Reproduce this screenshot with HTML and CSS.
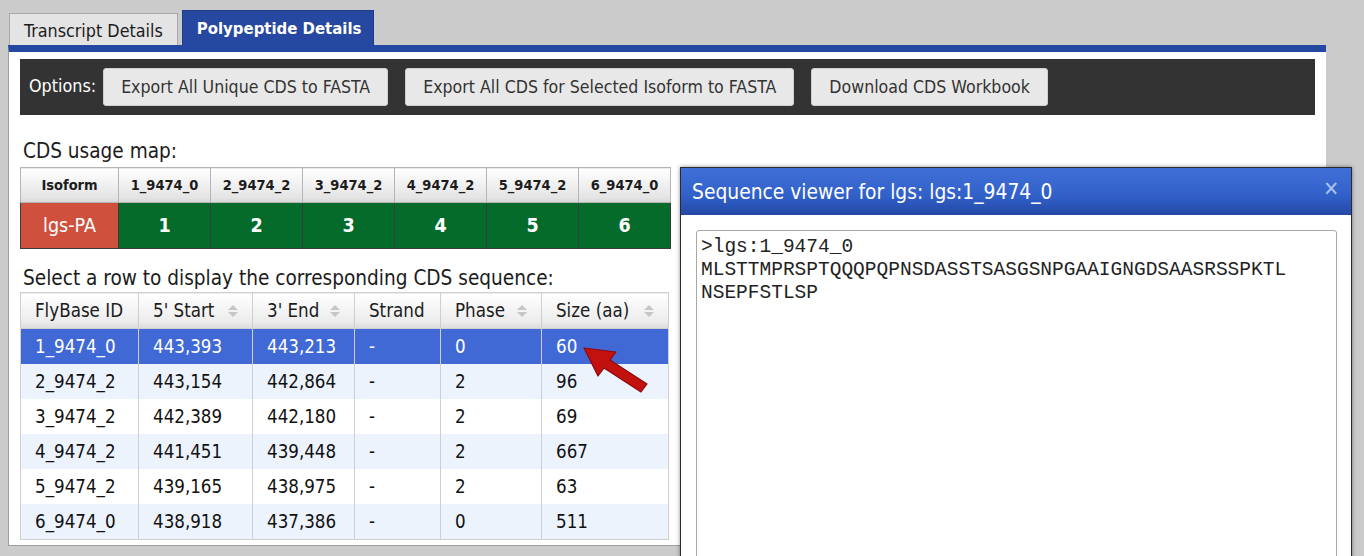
FILE: index.html
```html
<!DOCTYPE html>
<html>
<head>
<meta charset="utf-8">
<link rel="stylesheet" href="styles.css">
</head>
<body>
<div class="page">
  <div class="main">
    <div class="tabs">
      <div class="tab">Transcript Details</div>
      <div class="tab active">Polypeptide Details</div>
    </div>
    <div class="panel">
      <div class="options">
        <span class="opt-label">Options:</span>
        <button class="btn">Export All Unique CDS to FASTA</button>
        <button class="btn">Export All CDS for Selected Isoform to FASTA</button>
        <button class="btn">Download CDS Workbook</button>
      </div>
      <h2 class="heading first">CDS usage map:</h2>
      <table class="map">
        <thead>
          <tr><th class="iso">Isoform</th><th>1_9474_0</th><th>2_9474_2</th><th>3_9474_2</th><th>4_9474_2</th><th>5_9474_2</th><th>6_9474_0</th></tr>
        </thead>
        <tbody>
          <tr><td class="name">lgs-PA</td><td class="on">1</td><td class="on">2</td><td class="on">3</td><td class="on">4</td><td class="on">5</td><td class="on">6</td></tr>
        </tbody>
      </table>
      <h2 class="heading second">Select a row to display the corresponding CDS sequence:</h2>
      <table class="cds">
        <colgroup><col class="c1"><col class="c2"><col class="c3"><col class="c4"><col class="c5"><col class="c6"></colgroup>
        <thead>
          <tr>
            <th>FlyBase ID</th>
            <th class="sort">5' Start</th>
            <th class="sort">3' End</th>
            <th>Strand</th>
            <th class="sort">Phase</th>
            <th class="sort">Size (aa)</th>
          </tr>
        </thead>
        <tbody>
          <tr class="sel"><td>1_9474_0</td><td>443,393</td><td>443,213</td><td>-</td><td>0</td><td>60</td></tr>
          <tr class="odd"><td>2_9474_2</td><td>443,154</td><td>442,864</td><td>-</td><td>2</td><td>96</td></tr>
          <tr><td>3_9474_2</td><td>442,389</td><td>442,180</td><td>-</td><td>2</td><td>69</td></tr>
          <tr class="odd"><td>4_9474_2</td><td>441,451</td><td>439,448</td><td>-</td><td>2</td><td>667</td></tr>
          <tr><td>5_9474_2</td><td>439,165</td><td>438,975</td><td>-</td><td>2</td><td>63</td></tr>
          <tr class="odd"><td>6_9474_0</td><td>438,918</td><td>437,386</td><td>-</td><td>0</td><td>511</td></tr>
        </tbody>
      </table>
    </div>
  </div>
  <div class="strip"></div>
</div>

<svg class="arrow" width="70" height="50" viewBox="0 0 70 50">
  <path d="M2 2 L34 6 L28 14 L65 38 L59 46 L22 22 L16 30 Z" fill="#c3110f" stroke="#8e0a0a" stroke-width="1.2" stroke-linejoin="round"/>
</svg>

<div class="dialog">
  <div class="dlg-title">
    <span>Sequence viewer for lgs: lgs:1_9474_0</span>
    <span class="close">&#x2715;</span>
  </div>
  <div class="dlg-body">
    <div class="seq">&gt;lgs:1_9474_0
MLSTTMPRSPTQQQPQPNSDASSTSASGSNPGAAIGNGDSAASRSSPKTL
NSEPFSTLSP</div>
  </div>
</div>
</body>
</html>
```

FILE: styles.css
```css
html, body {
  margin: 0;
  padding: 0;
  height: 100%;
  overflow: hidden;
}
body {
  background: #cbcbcb;
  font-family: "DejaVu Sans Condensed", "DejaVu Sans", sans-serif;
  color: #1c1c1c;
  position: relative;
}
.page {
  display: flex;
  height: 100%;
}
.main {
  width: 1326px;
  padding-left: 8px;
  box-sizing: border-box;
  padding-top: 10px;
}
.strip {
  width: 24px;
  background: #cbcbcb;
}
.tabs {
  display: flex;
  align-items: flex-end;
  gap: 4px;
  padding-left: 1px;
  height: 35px;
}
.tab {
  height: 32px;
  box-sizing: border-box;
  padding: 0 14px;
  border: 1px solid #a9a9a9;
  border-bottom: none;
  background: #e4e4e4;
  font-size: 17.8px;
  line-height: 33px;
  color: #1c1c1c;
}
.tab.active {
  height: 35px;
  line-height: 36px;
  padding: 0 12px 0 14px;
  background: #2748a0;
  border-color: #1e3b8a;
  color: #fff;
  font-weight: bold;
  font-size: 16.6px;
}
.panel {
  background: #fff;
  border-top: 7px solid #2447a1;
  border-left: 1px solid #9e9e9e;
  border-bottom: 1px solid #9e9e9e;
  padding: 7px 11px 5px 11px;
}
.options {
  background: #333;
  height: 56px;
  box-sizing: border-box;
  display: flex;
  align-items: center;
  padding: 0 0 0 9px;
  gap: 17px;
}
.opt-label {
  color: #fff;
  font-size: 17.8px;
  margin-right: -10px;
  position: relative;
  top: -2px;
}
.btn {
  font-family: inherit;
  font-size: 17.6px;
  color: #333;
  background: #e8e8e8;
  border: 1px solid #d0d0d0;
  border-radius: 3px;
  height: 38px;
  padding: 0 17px;
  margin: 0;
}
.heading {
  font-weight: normal;
  font-size: 20.6px;
  line-height: 22px;
  margin: 18px 0 5px 3px;
  color: #1c1c1c;
}
.heading.first {
  margin-top: 25px;
}
.heading.second {
  margin-bottom: 3px;
}
table {
  border-collapse: collapse;
}
.map {
  width: 651px;
  table-layout: fixed;
  border: 1px solid #8e8e8e;
}
.map th {
  height: 34px;
  padding: 0;
  font-size: 14.5px;
  font-weight: bold;
  color: #1c1c1c;
  background: linear-gradient(#ffffff, #e4e4e4 85%, #d8d8d8);
  border: 1px solid #b5b5b5;
}
.map th.iso {
  width: 97px;
}
.map td {
  height: 45px;
  padding: 0;
  text-align: center;
  color: #fff;
  border: 1px solid #3b3b3b;
}
.map td.name {
  background: #cf513d;
  font-size: 19.5px;
}
.map td.on {
  background: #046b2b;
  font-size: 19.5px;
  font-weight: bold;
}
.cds {
  width: 648px;
  table-layout: fixed;
  border: 1px solid #cfcfcf;
  font-size: 18.6px;
}
.cds col.c1 { width: 118px; }
.cds col.c2 { width: 114px; }
.cds col.c3 { width: 102px; }
.cds col.c4 { width: 86px; }
.cds col.c5 { width: 101px; }
.cds col.c6 { width: 127px; }
.cds th {
  height: 35px;
  padding: 0 0 0 14px;
  text-align: left;
  font-weight: normal;
  color: #1c1c1c;
  background: linear-gradient(#ffffff, #ececec 80%, #dcdcdc);
  border: 1px solid #cfcfcf;
  position: relative;
}
.cds th.sort::before,
.cds th.sort::after {
  content: "";
  position: absolute;
  right: 14px;
  width: 0;
  height: 0;
  border-left: 5px solid transparent;
  border-right: 5px solid transparent;
}
.cds th.sort::before {
  top: 12px;
  border-bottom: 5px solid #c6c6c6;
}
.cds th.sort::after {
  top: 19px;
  border-top: 5px solid #c6c6c6;
}
.cds td {
  height: 35px;
  padding: 0 0 0 14px;
  border-left: 1px solid #cfcfcf;
  border-right: 1px solid #cfcfcf;
  color: #111;
}
.cds tr.odd td {
  background: #ecf3fd;
}
.cds tr.sel td {
  background: #4169d6;
  color: #fff;
}
.arrow {
  position: absolute;
  left: 582px;
  top: 346px;
}
.dialog {
  position: absolute;
  left: 680px;
  top: 167px;
  width: 672px;
  height: 420px;
  box-sizing: border-box;
  background: #fff;
  border: 1px solid #2a2a2a;
  box-shadow: 0 0 4px rgba(0,0,0,0.45);
}
.dlg-title {
  height: 47px;
  box-sizing: border-box;
  background: linear-gradient(#416fd8, #3160c8 60%, #2448a6);
  color: #fff;
  display: flex;
  align-items: center;
  justify-content: space-between;
  padding: 0 12px 0 11px;
  font-size: 20.8px;
}
.close {
  color: #a9c1ee;
  font-size: 21px;
  font-weight: bold;
  position: relative;
  top: -3px;
}
.dlg-body {
  padding: 15px 14px 0 15px;
}
.seq {
  border: 1px solid #a8a8a8;
  border-radius: 3px;
  height: 360px;
  padding: 5px 4px 1px;
  font-family: "Liberation Mono", monospace;
  font-size: 19.5px;
  line-height: 23px;
  white-space: pre;
  color: #222;
}
```
